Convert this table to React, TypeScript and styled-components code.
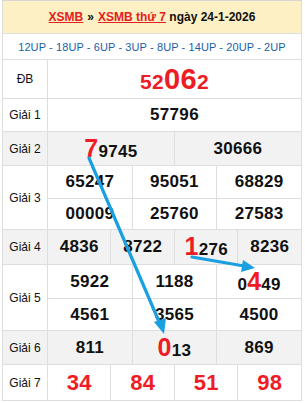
import React from "react";
import styled, { createGlobalStyle } from "styled-components";

const Global = createGlobalStyle`
  html, body { margin: 0; padding: 0; background: #fff; }
  body { font-family: "Liberation Sans", Arial, sans-serif; }
`;

const Page = styled.div`
  position: relative;
  width: 305px;
  height: 403px;
  overflow: hidden;
  background: #fff;
`;

const Frame = styled.div`
  margin-left: 2px;
  width: 300px;
  border-top: 1px solid #d6d6d6;
  background: #fcf6e6;
`;

const Header = styled.div`
  height: 32px;
  background: #fcf0c4;
  display: flex;
  align-items: center;
  justify-content: center;
  font-size: 12px;
  font-weight: bold;
  color: #111;
  border-left: 1px solid #dedede;
  border-right: 1px solid #dedede;
`;

const RedLink = styled.a`
  color: #e3201c;
  text-decoration: underline;
`;

const Sep = styled.span`
  margin: 0 4px;
  font-weight: bold;
`;

const Table = styled.table`
  width: 300px;
  border-collapse: collapse;
  table-layout: fixed;
  background: #fff;
`;

const UpCell = styled.td`
  height: 25px;
  padding: 0;
  border: 1px solid #dedede;
  text-align: center;
  font-size: 11px;
  color: #1a5ea8;
  white-space: nowrap;
  letter-spacing: 0.1px;
`;

const Row = styled.tr<{ $gray?: boolean }>`
  background: ${(p) => (p.$gray ? "#f2f2f2" : "#fff")};
`;

const Label = styled.td<{ $h?: number }>`
  height: ${(p) => p.$h ?? 32}px;
  padding: 0;
  border: 1px solid #dedede;
  text-align: center;
  font-size: 12px;
  color: #111;
  vertical-align: middle;
`;

const Num = styled.td<{ $h?: number; $red?: boolean; $size?: number }>`
  height: ${(p) => p.$h ?? 32}px;
  padding: 0;
  border: 1px solid #dedede;
  text-align: center;
  vertical-align: middle;
  font-weight: bold;
  font-size: ${(p) => p.$size ?? 17}px;
  color: ${(p) => (p.$red ? "#ee1c25" : "#111")};
  letter-spacing: 0.3px;
  white-space: nowrap;
`;

const Hi = styled.span<{ $size?: number }>`
  color: #ee1c25;
  font-size: ${(p) => p.$size ?? 25}px;
  line-height: 1;
`;

const Small = styled.span`
  color: #ee1c25;
  font-size: 21px;
`;

const Big = styled.span`
  color: #ee1c25;
  font-size: 29px;
`;

const DbWrap = styled.span`
  line-height: 1;
`;

const Overlay = styled.svg`
  position: absolute;
  left: 0;
  top: 0;
  pointer-events: none;
`;

const cols = Array.from({ length: 12 });

export default function App() {
  return (
    <Page>
      <Global />
      <Frame>
        <Header>
          <RedLink>XSMB</RedLink>
          <Sep>»</Sep>
          <RedLink>XSMB thứ 7</RedLink>
          <span>&nbsp;ngày 24-1-2026</span>
        </Header>
        <Table>
          <colgroup>
            <col style={{ width: 45 }} />
            {cols.map((_, i) => (
              <col key={i} />
            ))}
          </colgroup>
          <tbody>
            <tr>
              <UpCell colSpan={13}>
                12UP - 18UP - 6UP - 3UP - 8UP - 14UP - 20UP - 2UP
              </UpCell>
            </tr>
            <Row>
              <Label $h={38}>ĐB</Label>
              <Num colSpan={12} $h={38}>
                <DbWrap>
                  <Small>52</Small>
                  <Big>06</Big>
                  <Small>2</Small>
                </DbWrap>
              </Num>
            </Row>
            <Row>
              <Label>Giải 1</Label>
              <Num colSpan={12}>57796</Num>
            </Row>
            <Row $gray>
              <Label $h={33}>Giải 2</Label>
              <Num colSpan={6} $h={33}>
                <Hi>7</Hi>9745
              </Num>
              <Num colSpan={6} $h={33}>30666</Num>
            </Row>
            <Row>
              <Label rowSpan={2}>Giải 3</Label>
              <Num colSpan={4} $h={32}>65247</Num>
              <Num colSpan={4} $h={32}>95051</Num>
              <Num colSpan={4} $h={32}>68829</Num>
            </Row>
            <Row>
              <Num colSpan={4} $h={30}>00009</Num>
              <Num colSpan={4} $h={30}>25760</Num>
              <Num colSpan={4} $h={30}>27583</Num>
            </Row>
            <Row $gray>
              <Label $h={34}>Giải 4</Label>
              <Num colSpan={3} $h={34}>4836</Num>
              <Num colSpan={3} $h={34}>8722</Num>
              <Num colSpan={3} $h={34}>
                <Hi>1</Hi>276
              </Num>
              <Num colSpan={3} $h={34}>8236</Num>
            </Row>
            <Row>
              <Label rowSpan={2}>Giải 5</Label>
              <Num colSpan={4} $h={33}>5922</Num>
              <Num colSpan={4} $h={33}>1188</Num>
              <Num colSpan={4} $h={33}>
                0<Hi>4</Hi>49
              </Num>
            </Row>
            <Row>
              <Num colSpan={4} $h={31}>4561</Num>
              <Num colSpan={4} $h={31}>3565</Num>
              <Num colSpan={4} $h={31}>4500</Num>
            </Row>
            <Row $gray>
              <Label $h={33}>Giải 6</Label>
              <Num colSpan={4} $h={33}>811</Num>
              <Num colSpan={4} $h={33}>
                <Hi>0</Hi>13
              </Num>
              <Num colSpan={4} $h={33}>869</Num>
            </Row>
            <Row>
              <Label $h={35}>Giải 7</Label>
              <Num colSpan={3} $h={35} $red $size={22}>34</Num>
              <Num colSpan={3} $h={35} $red $size={22}>84</Num>
              <Num colSpan={3} $h={35} $red $size={22}>51</Num>
              <Num colSpan={3} $h={35} $red $size={22}>98</Num>
            </Row>
          </tbody>
        </Table>
      </Frame>
      <Overlay width="305" height="403" viewBox="0 0 305 403">
        <g stroke="#1a9fe0" strokeWidth="3.2" strokeLinecap="round" fill="#1a9fe0">
          <line x1="89" y1="158" x2="160" y2="324" />
          <polygon points="164,334 154,322 166,318" stroke="none" />
          <line x1="192" y1="257" x2="244" y2="266" />
          <polygon points="255,268 243,260 241,272" stroke="none" />
        </g>
      </Overlay>
    </Page>
  );
}
